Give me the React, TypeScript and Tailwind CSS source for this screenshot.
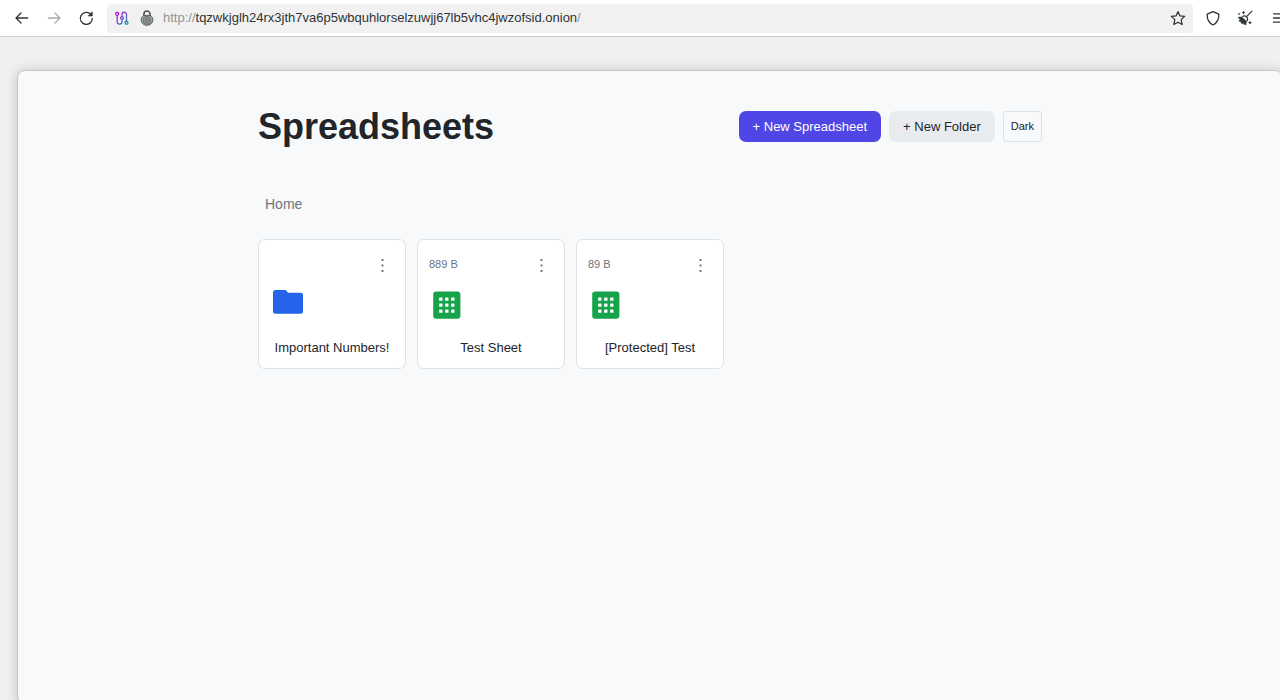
import React from "react";

type Item = { name: string; kind: "folder" | "sheet"; size?: string };

const items: Item[] = [
  { name: "Important Numbers!", kind: "folder" },
  { name: "Test Sheet", kind: "sheet", size: "889 B" },
  { name: "[Protected] Test", kind: "sheet", size: "89 B" },
];

const stroke = {
  fill: "none",
  stroke: "currentColor",
  strokeWidth: 1.3,
  strokeLinecap: "round" as const,
  strokeLinejoin: "round" as const,
};

function BackIcon() {
  return (
    <svg width="16" height="16" viewBox="0 0 16 16" {...stroke} aria-hidden="true">
      <path d="M7 3 2 8l5 5M2 8h11.700" />
    </svg>
  );
}

function ForwardIcon() {
  return (
    <svg width="16" height="16" viewBox="0 0 16 16" {...stroke} aria-hidden="true">
      <path d="m9 3 5 5-5 5M14 8H2.300" />
    </svg>
  );
}

function ReloadIcon() {
  return (
    <svg width="16" height="16" viewBox="0 0 16 16" {...stroke} aria-hidden="true">
      <path d="M14.300 8.500A6 6 0 1 1 11.900 3.600L13.300 5" />
      <path d="M14.300 2v4h-4z" fill="currentColor" strokeWidth="0.600" />
    </svg>
  );
}

function CircuitIcon() {
  return (
    <svg width="16" height="16" viewBox="0 0 16 16" fill="none" aria-hidden="true">
      <defs>
        <linearGradient id="circuit" x1="0" y1="0" x2="16" y2="16" gradientUnits="userSpaceOnUse">
          <stop offset="0.100" stopColor="#c800d7" />
          <stop offset="0.500" stopColor="#7550d8" />
          <stop offset="0.900" stopColor="#0090b0" />
        </linearGradient>
      </defs>
      <g stroke="url(#circuit)" strokeWidth="1.300">
        <circle cx="3.200" cy="3.800" r="1.500" />
        <circle cx="8" cy="8" r="1.400" />
        <circle cx="12.500" cy="12.800" r="1.500" />
        <path d="M3.200 5.300v6.500a2.400 2.400 0 0 0 4.800 0V9.400M8 6.600V4.500a2.250 2.250 0 0 1 4.500 0v6.800" />
      </g>
    </svg>
  );
}

function OnionLockIcon() {
  return (
    <svg width="16" height="16" viewBox="0 0 16 16" fill="none" stroke="#4b4f50" aria-hidden="true">
      <path d="M4.900 6V4.200a3.100 3.100 0 0 1 6.200 0V6" strokeWidth="1.500" />
      <path d="M4.600 5.400h6.800c1.600 1.100 2.500 2.600 2.500 4.300A5.700 5.700 0 0 1 8 15.300a5.700 5.700 0 0 1-5.900-5.600c0-1.700.9-3.200 2.500-4.300Z" fill="#a6a9a9" strokeWidth="0.900" />
      <circle cx="8" cy="10.200" r="3.900" strokeWidth="0.600" />
      <circle cx="8" cy="10.200" r="2.300" strokeWidth="0.600" />
      <circle cx="8" cy="10.200" r="0.800" strokeWidth="0.600" />
    </svg>
  );
}

function StarIcon() {
  return (
    <svg width="16" height="16" viewBox="0 0 16 16" {...stroke} aria-hidden="true">
      <path d="m8 1.700 1.900 4.100 4.700.6-3.400 3.200.9 4.900L8 12.200l-4.100 2.300.9-4.900-3.400-3.200 4.700-.6Z" />
    </svg>
  );
}

function ShieldIcon() {
  return (
    <svg width="16" height="16" viewBox="0 0 16 16" {...stroke} aria-hidden="true">
      <path d="M8 1.600 13.800 4.200c.2 4.600-1.300 8.600-5.800 10.700C3.500 12.800 2 8.800 2.200 4.200Z" />
    </svg>
  );
}

function BroomIcon() {
  return (
    <svg width="16" height="16" viewBox="0 0 16 16" fill="none" stroke="currentColor" aria-hidden="true">
      <path d="M15 1.200 9.800 6.400" strokeWidth="1.200" strokeLinecap="round" />
      <path d="M5.300 6.500c1.700-.9 3.300-.7 4.300.3s1.300 2.600.4 4.300" strokeWidth="1.200" />
      <path d="M1 7.300 4.800 6.900l4.700 4.400-.7 3.700-1.900-.8.300-1.500-1.600 1.200-1.700-1.200 1-1.300-2 .4-1-1.300 1.300-.8Z" fill="currentColor" strokeWidth="0.500" />
      <g fill="currentColor" stroke="none">
        <path d="m6.500.8.700 1.100 1.100.7-1.100.7-.7 1.100-.7-1.100-1.100-.7 1.100-.7ZM13 10.800l.7 1.200 1.200.7-1.200.7-.7 1.200-.7-1.200-1.200-.7 1.200-.7ZM2 2.700l.5.800.8.5-.8.500-.5.8-.5-.8-.8-.5.800-.5Z" />
      </g>
    </svg>
  );
}

function MenuIcon() {
  return (
    <svg width="16" height="16" viewBox="0 0 16 16" {...stroke} aria-hidden="true">
      <path d="M1.500 3.800h13M1.500 8h13M1.500 12.200h13" />
    </svg>
  );
}

function FolderIcon() {
  return (
    <svg width="32" height="26" viewBox="0 0 32 26" aria-hidden="true">
      <path d="M3.500 1h9c1 0 1.600.3 2.200 1L16 3.800h12.500A2.500 2.500 0 0 1 31 6.300v16a2.500 2.500 0 0 1-2.500 2.500h-25A2.500 2.500 0 0 1 1 22.300V3.500A2.500 2.500 0 0 1 3.500 1Z" fill="#2563eb" />
    </svg>
  );
}

function SheetIcon() {
  const steps = [6, 12, 18];
  return (
    <svg width="28" height="28" viewBox="0 0 28 28" aria-hidden="true">
      <rect x="0.200" y="0.600" width="27.200" height="27.200" rx="3" fill="#16a34a" />
      {steps.map((y) =>
        steps.map((x) => <rect key={`${x}-${y}`} x={x + 0.1} y={y + 0.4} width="3.400" height="3.400" rx="0.500" fill="#fff" />)
      )}
    </svg>
  );
}

function DotsIcon() {
  return (
    <svg width="16" height="16" viewBox="0 0 16 16" fill="#6c757d" aria-hidden="true">
      <rect x="7.500" y="2" width="2" height="2" rx="0.400" />
      <rect x="7.500" y="7.500" width="2" height="2" rx="0.400" />
      <rect x="7.500" y="13" width="2" height="2" rx="0.400" />
    </svg>
  );
}

function BrowserBar() {
  return (
    <header className="flex h-[37px] shrink-0 items-center border-b border-[#cfcac4] bg-white pl-3.5 text-[#2e3436]">
      <nav aria-label="History" className="flex gap-4 pr-[13px]">
        <button aria-label="Back"><BackIcon /></button>
        <button aria-label="Forward" disabled className="text-[#a9abac]"><ForwardIcon /></button>
        <button aria-label="Reload"><ReloadIcon /></button>
      </nav>
      <div className="flex h-[29px] min-w-0 flex-1 items-center rounded-[4px] bg-[#f1f1f1] px-[7px]">
        <button aria-label="Circuit" className="mr-[9px]"><CircuitIcon /></button>
        <button aria-label="Site information" className="mr-2"><OnionLockIcon /></button>
        <div className="flex min-w-0 flex-1 items-center text-[13px] leading-5 text-[#929595]">
          <label htmlFor="address">http://</label>
          <input
            id="address"
            defaultValue="tqzwkjglh24rx3jth7va6p5wbquhlorselzuwjj67lb5vhc4jwzofsid.onion"
            className="min-w-0 bg-transparent text-[#2e3436] outline-none [field-sizing:content]"
          />
          <span>/</span>
        </div>
        <button aria-label="Bookmark"><StarIcon /></button>
      </div>
      <div className="-mr-2 flex shrink-0 gap-4 pl-3">
        <button aria-label="Security level"><ShieldIcon /></button>
        <button aria-label="New identity"><BroomIcon /></button>
        <button aria-label="Menu" className="ml-[3px]"><MenuIcon /></button>
      </div>
    </header>
  );
}

function Card({ item }: { item: Item }) {
  return (
    <li className="flex h-[130px] flex-col rounded-[7px] border border-[#dee2e6] bg-white px-[11px] pt-4 pb-2.5">
      <div className="flex items-start justify-between">
        <span className="text-[11px] leading-4 text-[#6c757d]">{item.size}</span>
        <button aria-label={`Options for ${item.name}`} className="mr-1 py-px"><DotsIcon /></button>
      </div>
      <div className="flex h-16 items-center pl-1">
        {item.kind === "folder" ? <span className="-ml-1 pb-2 pl-0.5"><FolderIcon /></span> : <span className="pb-0.5"><SheetIcon /></span>}
      </div>
      <a href="#open" className="text-center text-[13px] leading-5 text-[#212529]">{item.name}</a>
    </li>
  );
}

export default function App() {
  return (
    <div className="flex h-screen flex-col overflow-hidden bg-[#f0f0f0] font-['Liberation_Sans',Arial,sans-serif]">
      <BrowserBar />
      <div className="-mr-[3px] -mb-1 flex flex-1 pt-[33px] pl-[17px]">
        <main className="flex-1 rounded-[8px] border border-[#c9c5c1] bg-[#f8f9fb] pt-9 shadow-[0_1px_12px_rgba(0,0,0,0.2)]">
          <div className="mx-auto w-full max-w-[784px]">
            <div className="flex items-start justify-between">
              <h1 className="text-[36px] leading-10 font-bold text-[#212529]">Spreadsheets</h1>
              <div className="flex gap-2 pt-1">
                <button className="h-[31px] rounded-[7px] bg-[#4f46e5] px-3.5 text-[13px] text-white">+ New Spreadsheet</button>
                <button className="h-[31px] rounded-[7px] bg-[#e9ecef] px-3.5 text-[13px] text-[#212529]">+ New Folder</button>
                <button className="h-[31px] rounded-[3px] border border-[#dee2e6] bg-[#f8f9fa] px-[7px] text-[11px] text-[#212529]">Dark</button>
              </div>
            </div>
            <nav aria-label="Breadcrumb" className="mt-[47px] px-[7px] text-[14px] leading-5 text-[#6c757d]">
              <a href="#home">Home</a>
            </nav>
            <ul className="mt-[25px] grid grid-cols-[repeat(auto-fill,minmax(140px,1fr))] gap-[11px]">
              {items.map((item) => <Card key={item.name} item={item} />)}
            </ul>
          </div>
        </main>
      </div>
    </div>
  );
}
